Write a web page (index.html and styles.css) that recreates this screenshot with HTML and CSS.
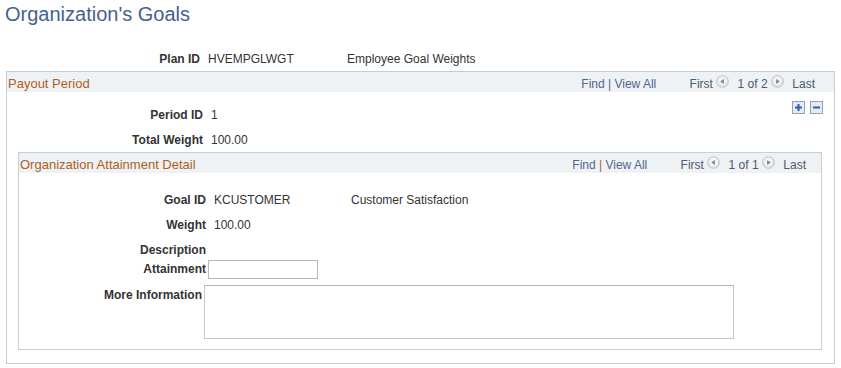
FILE: index.html
```html
<!DOCTYPE html>
<html lang="en">
<head>
    <meta charset="UTF-8">
    <title>Organization's Goals</title>
    <link rel="stylesheet" href="styles.css">
</head>
<body>
    <h1 class="page-title">Organization's Goals</h1>

    <div class="field-row plan-row">
        <span class="field-label">Plan ID</span>
        <span class="field-value">HVEMPGLWGT</span>
        <span class="field-desc">Employee Goal Weights</span>
    </div>

    <section class="grid-box payout-box">
        <div class="grid-head">
            <span class="grid-title">Payout Period</span>
            <div class="grid-nav">
                <a href="#">Find</a> <span class="sep">|</span> <a href="#">View All</a>
                <span class="pager">First <svg class="arrow" width="18" height="13" viewBox="0 0 18 13"><circle cx="6.5" cy="6.5" r="6" fill="#d9dbde" stroke="#c9ccd0"/><circle cx="6.5" cy="6" r="4.5" fill="#f1f2f4"/><path d="M4.3 6.5 L7.9 4 L7.9 9 Z" fill="#80858c"/></svg> 1 of 2 <svg class="arrow" width="18" height="13" viewBox="0 0 18 13"><circle cx="6.5" cy="6.5" r="6" fill="#d9dbde" stroke="#c9ccd0"/><circle cx="6.5" cy="6" r="4.5" fill="#f1f2f4"/><path d="M8.7 6.5 L5.1 4 L5.1 9 Z" fill="#80858c"/></svg> Last</span>
            </div>
        </div>

        <div class="grid-body">
            <div class="field-row">
                <span class="field-label">Period ID</span>
                <span class="field-value">1</span>
                <div class="row-tools">
                    <svg width="13" height="13" viewBox="0 0 13 13"><rect x="0.5" y="0.5" width="12" height="12" fill="#e4ebf3" stroke="#8ea2bb"/><path d="M6.5 3 V10 M3 6.5 H10" stroke="#2a5ea8" stroke-width="2"/></svg>
                    <svg width="13" height="13" viewBox="0 0 13 13"><rect x="0.5" y="0.5" width="12" height="12" fill="#e4ebf3" stroke="#8ea2bb"/><path d="M3 6.5 H10" stroke="#2a5ea8" stroke-width="2"/></svg>
                </div>
            </div>
            <div class="field-row">
                <span class="field-label">Total Weight</span>
                <span class="field-value">100.00</span>
            </div>

            <section class="grid-box detail-box">
                <div class="grid-head">
                    <span class="grid-title">Organization Attainment Detail</span>
                    <div class="grid-nav">
                        <a href="#">Find</a> <span class="sep red">|</span> <a href="#">View All</a>
                        <span class="pager">First <svg class="arrow" width="18" height="13" viewBox="0 0 18 13"><circle cx="6.5" cy="6.5" r="6" fill="#d9dbde" stroke="#c9ccd0"/><circle cx="6.5" cy="6" r="4.5" fill="#f1f2f4"/><path d="M4.3 6.5 L7.9 4 L7.9 9 Z" fill="#80858c"/></svg> 1 of 1 <svg class="arrow" width="18" height="13" viewBox="0 0 18 13"><circle cx="6.5" cy="6.5" r="6" fill="#d9dbde" stroke="#c9ccd0"/><circle cx="6.5" cy="6" r="4.5" fill="#f1f2f4"/><path d="M8.7 6.5 L5.1 4 L5.1 9 Z" fill="#80858c"/></svg> Last</span>
                    </div>
                </div>

                <div class="grid-body detail-body">
                    <div class="field-row">
                        <span class="field-label">Goal ID</span>
                        <span class="field-value goal-id">KCUSTOMER</span>
                        <span class="field-desc">Customer Satisfaction</span>
                    </div>
                    <div class="field-row">
                        <span class="field-label">Weight</span>
                        <span class="field-value">100.00</span>
                    </div>
                    <div class="field-row desc-row">
                        <span class="field-label">Description</span>
                    </div>
                    <div class="field-row attain-row">
                        <span class="field-label">Attainment</span>
                        <input class="attain-input" type="text">
                    </div>
                    <div class="field-row info-row">
                        <span class="field-label">More Information</span>
                        <textarea class="info-text"></textarea>
                    </div>
                </div>
            </section>
        </div>
    </section>
</body>
</html>
```

FILE: styles.css
```css
* {
    margin: 0;
    padding: 0;
    box-sizing: border-box;
}

body {
    font-family: "Liberation Sans", Arial, sans-serif;
    font-size: 12px;
    color: #333;
    background: #fff;
}

.page-title {
    font-size: 20px;
    font-weight: normal;
    line-height: 24px;
    color: #44618f;
    padding: 2px 0 0 5px;
    height: 46px;
}

/* label / value rows */
.field-row {
    display: flex;
    align-items: center;
    height: 25px;
    line-height: 14px;
}

.field-label {
    flex: none;
    width: 196px;
    font-weight: bold;
    text-align: right;
}

.field-value {
    margin-left: 8px;
}

.plan-row .field-label {
    width: 200px;
}

.plan-row .field-value {
    width: 139px;
}

/* scroll areas */
.grid-box {
    border: 1px solid #c8ced5;
}

.payout-box {
    margin-left: 6px;
    width: 829px;
}

.detail-box {
    margin: 0 12px 13px 11px;
}

.grid-head {
    display: flex;
    justify-content: space-between;
    height: 20px;
    line-height: 18px;
    padding: 3px 19px 0 1px;
    background: #eef2f4;
}

.detail-box .grid-head {
    padding-right: 15px;
}

.grid-title {
    font-size: 13px;
    color: #b0601e;
}

.grid-nav {
    white-space: nowrap;
    color: #4d5a70;
}

.grid-nav a {
    color: #4f6790;
    text-decoration: none;
}

.grid-nav .sep {
    color: #4f6790;
}

.grid-nav .sep.red {
    color: #c0562a;
}

.pager {
    margin-left: 30px;
}

.arrow {
    vertical-align: 0;
}

.grid-body {
    padding-top: 10px;
}

.row-tools {
    display: flex;
    gap: 5px;
    margin-left: auto;
    margin-right: 11px;
    align-self: flex-start;
    margin-top: -1px;
}

.row-tools svg {
    display: block;
}

/* detail area */
.detail-body {
    padding-top: 14px;
    padding-bottom: 10px;
}

.detail-body .field-label {
    width: 187px;
}

.goal-id {
    width: 137px;
}

.desc-row {
    height: 22px;
    align-items: flex-start;
    padding-top: 6px;
}

.attain-row {
    height: 20px;
}

.attain-input {
    margin-left: 2px;
    width: 110px;
    height: 19px;
    border: 1px solid #b4b8bd;
    background: #fff;
}

.info-row {
    height: auto;
    align-items: flex-start;
    margin-top: 6px;
}

.info-row .field-label {
    width: 183px;
    padding-top: 3px;
}

.info-text {
    margin-left: 2px;
    width: 530px;
    height: 54px;
    border: 1px solid #c4c8cd;
    border-top-color: #b0b4b9;
    resize: none;
    font-family: inherit;
}
```
